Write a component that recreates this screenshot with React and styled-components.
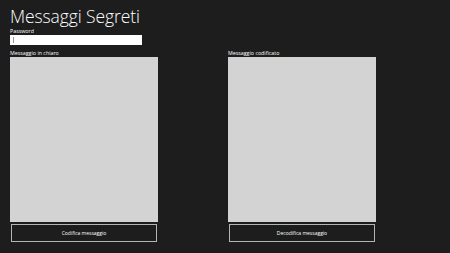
import React from 'react';
import styled, { createGlobalStyle } from 'styled-components';

const GlobalStyle = createGlobalStyle`
  html, body {
    margin: 0;
    padding: 0;
    background-color: #1d1d1d;
  }
  body {
    font-family: "Open Sans", "Liberation Sans", sans-serif;
    color: #ffffff;
  }
`;

const Page = styled.div`
  width: 450px;
  height: 253px;
  box-sizing: border-box;
  padding: 5px 10px 0 10px;
  background-color: #1d1d1d;
  overflow: hidden;
`;

const Title = styled.h1`
  margin: 0;
  font-size: 17.5px;
  font-weight: 300;
  line-height: 23px;
  letter-spacing: -0.1px;
  color: #ffffff;
`;

const Label = styled.div`
  font-size: 5.3px;
  line-height: 7px;
  height: 7px;
  color: #ffffff;
  white-space: nowrap;
`;

const PasswordBox = styled.div`
  position: relative;
  width: 132px;
  height: 10px;
  background-color: #ffffff;
`;

const Caret = styled.span`
  position: absolute;
  left: 3px;
  top: 2px;
  width: 1px;
  height: 6px;
  background-color: #9a9a9a;
`;

const Columns = styled.div`
  display: flex;
  gap: 70px;
  margin-top: 5px;
`;

const Column = styled.div`
  display: flex;
  flex-direction: column;
  width: 148px;
`;

const TextArea = styled.div`
  height: 165px;
  background-color: #d3d3d3;
`;

const Button = styled.div`
  display: flex;
  align-items: center;
  justify-content: center;
  height: 16px;
  margin: 2px 1px 0 1px;
  border: 1px solid #b4b4b4;
  font-size: 5px;
  color: #ffffff;
  white-space: nowrap;
`;

function Panel({ label, action }) {
  return (
    <Column>
      <Label>{label}</Label>
      <TextArea />
      <Button>{action}</Button>
    </Column>
  );
}

export default function App() {
  return (
    <Page>
      <GlobalStyle />
      <Title>Messaggi Segreti</Title>
      <Label>Password</Label>
      <PasswordBox>
        <Caret />
      </PasswordBox>
      <Columns>
        <Panel label="Messaggio in chiaro" action="Codifica messaggio" />
        <Panel label="Messaggio codificato" action="Decodifica messaggio" />
      </Columns>
    </Page>
  );
}
